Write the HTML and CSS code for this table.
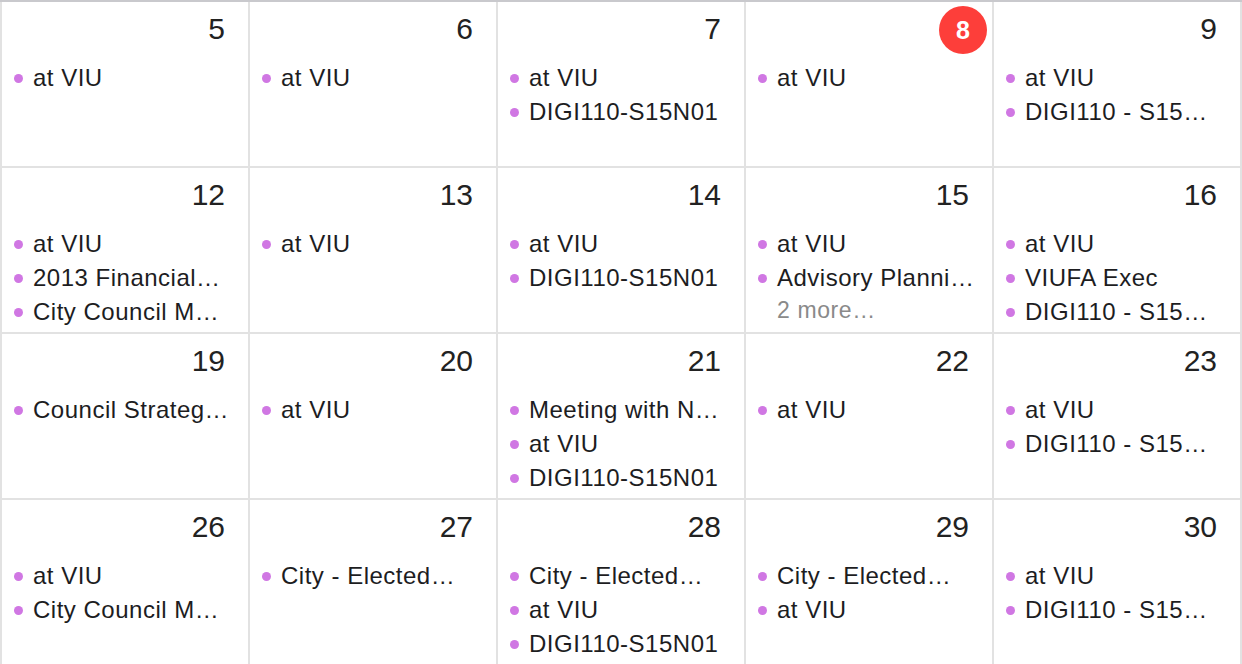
FILE: index.html
```html
<!DOCTYPE html>
<html lang="en">
<head>
<meta charset="utf-8">
<title>Calendar</title>
<link rel="stylesheet" href="styles.css">
</head>
<body>
<div class="month">
  <div class="day"><div class="head"><span class="num">5</span></div><ul class="events"><li class="ev">at VIU</li></ul></div>
  <div class="day"><div class="head"><span class="num">6</span></div><ul class="events"><li class="ev">at VIU</li></ul></div>
  <div class="day"><div class="head"><span class="num">7</span></div><ul class="events"><li class="ev">at VIU</li><li class="ev">DIGI110-S15N01</li></ul></div>
  <div class="day"><div class="head"><span class="num today">8</span></div><ul class="events"><li class="ev">at VIU</li></ul></div>
  <div class="day"><div class="head"><span class="num">9</span></div><ul class="events"><li class="ev">at VIU</li><li class="ev">DIGI110 - S15…</li></ul></div>

  <div class="day"><div class="head"><span class="num">12</span></div><ul class="events"><li class="ev">at VIU</li><li class="ev">2013 Financial…</li><li class="ev">City Council M…</li></ul></div>
  <div class="day"><div class="head"><span class="num">13</span></div><ul class="events"><li class="ev">at VIU</li></ul></div>
  <div class="day"><div class="head"><span class="num">14</span></div><ul class="events"><li class="ev">at VIU</li><li class="ev">DIGI110-S15N01</li></ul></div>
  <div class="day"><div class="head"><span class="num">15</span></div><ul class="events"><li class="ev">at VIU</li><li class="ev">Advisory Planni…</li><li class="more">2 more…</li></ul></div>
  <div class="day"><div class="head"><span class="num">16</span></div><ul class="events"><li class="ev">at VIU</li><li class="ev">VIUFA Exec</li><li class="ev">DIGI110 - S15…</li></ul></div>

  <div class="day"><div class="head"><span class="num">19</span></div><ul class="events"><li class="ev">Council Strateg…</li></ul></div>
  <div class="day"><div class="head"><span class="num">20</span></div><ul class="events"><li class="ev">at VIU</li></ul></div>
  <div class="day"><div class="head"><span class="num">21</span></div><ul class="events"><li class="ev">Meeting with N…</li><li class="ev">at VIU</li><li class="ev">DIGI110-S15N01</li></ul></div>
  <div class="day"><div class="head"><span class="num">22</span></div><ul class="events"><li class="ev">at VIU</li></ul></div>
  <div class="day"><div class="head"><span class="num">23</span></div><ul class="events"><li class="ev">at VIU</li><li class="ev">DIGI110 - S15…</li></ul></div>

  <div class="day"><div class="head"><span class="num">26</span></div><ul class="events"><li class="ev">at VIU</li><li class="ev">City Council M…</li></ul></div>
  <div class="day"><div class="head"><span class="num">27</span></div><ul class="events"><li class="ev">City - Elected…</li></ul></div>
  <div class="day"><div class="head"><span class="num">28</span></div><ul class="events"><li class="ev">City - Elected…</li><li class="ev">at VIU</li><li class="ev">DIGI110-S15N01</li></ul></div>
  <div class="day"><div class="head"><span class="num">29</span></div><ul class="events"><li class="ev">City - Elected…</li><li class="ev">at VIU</li></ul></div>
  <div class="day"><div class="head"><span class="num">30</span></div><ul class="events"><li class="ev">at VIU</li><li class="ev">DIGI110 - S15…</li></ul></div>
</div>
</body>
</html>
```

FILE: styles.css
```css
* { box-sizing: border-box; }
html, body {
  margin: 0;
  padding: 0;
  background: #ffffff;
  overflow: hidden;
  width: 1242px;
  height: 664px;
}
body {
  font-family: "Liberation Sans", Arial, sans-serif;
  color: #1d1d1f;
}
.month {
  display: grid;
  grid-template-columns: repeat(5, 246px);
  grid-auto-rows: 164px;
  gap: 2px;
  padding: 0 2px 2px 2px;
  border-top: 2px solid #c9c9cd;
  background: #e2e2e2;
  width: 1242px;
}
.day {
  background: #ffffff;
  overflow: hidden;
}
.head {
  height: 58px;
  display: flex;
  justify-content: flex-end;
  align-items: center;
  padding: 0 23px 4px 0;
}
.num {
  font-size: 30px;
  line-height: 1;
  color: #222;
}
.num.today {
  width: 48px;
  height: 48px;
  border-radius: 50%;
  background: #fd3e3a;
  color: #fff;
  font-size: 25px;
  font-weight: bold;
  display: flex;
  align-items: center;
  justify-content: center;
  margin-right: -18px;
  margin-top: 2px;
}
.events {
  list-style: none;
  margin: 0;
  padding: 1px 0 0 0;
}
.ev {
  display: flex;
  align-items: center;
  height: 34px;
  padding-left: 12px;
  font-size: 24px;
  letter-spacing: 0.5px;
  white-space: nowrap;
  color: #1d1d1f;
}
.ev::before {
  content: "";
  width: 9px;
  height: 9px;
  border-radius: 50%;
  background: #d077e3;
  margin-right: 10px;
  flex: none;
}
.more {
  height: 30px;
  line-height: 30px;
  padding-left: 31px;
  font-size: 23px;
  letter-spacing: 0.6px;
  color: #8a8a8a;
  white-space: nowrap;
}
```
